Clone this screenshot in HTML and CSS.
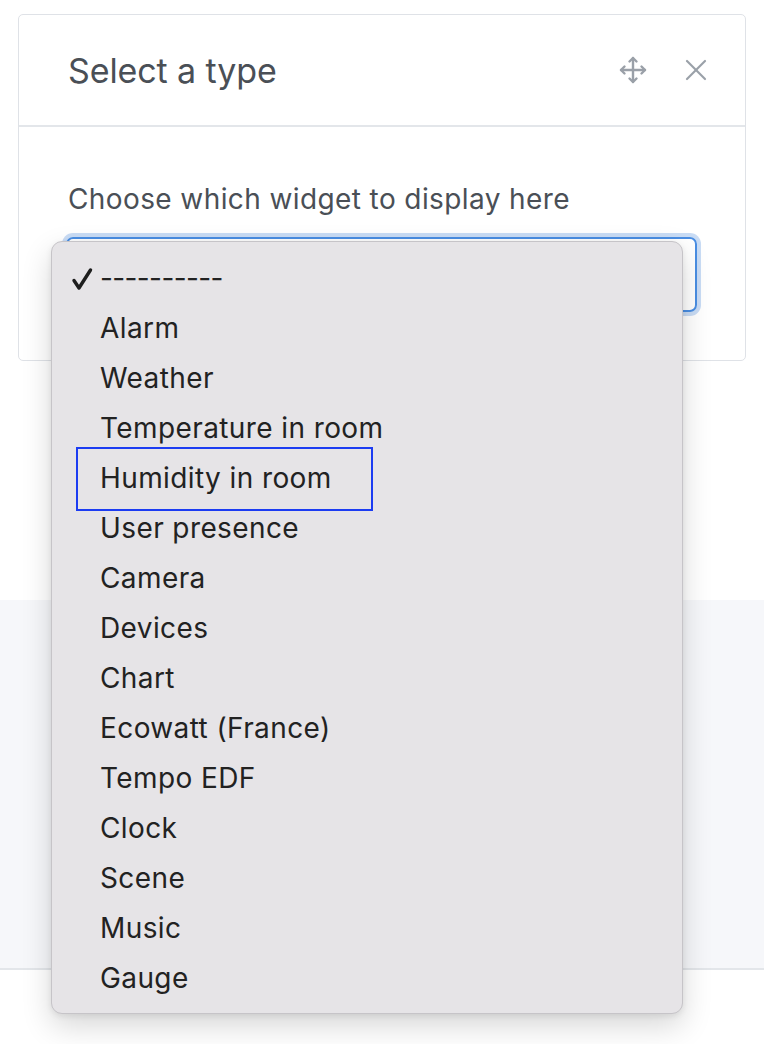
FILE: index.html
```html
<!DOCTYPE html>
<html lang="en">
<head>
<meta charset="utf-8">
<title>Select a type</title>
<link rel="stylesheet" href="styles.css">
</head>
<body>
<div class="page">
  <div class="top">
    <div class="modal">
      <div class="modal-header">
        <h5 class="modal-title">Select a type</h5>
        <div class="header-actions">
          <svg class="icon-move" width="28" height="28" viewBox="0 0 28 28" fill="none" stroke="#9aa0a8" stroke-width="2.4" stroke-linecap="round" stroke-linejoin="round">
            <line x1="14" y1="2" x2="14" y2="26"/>
            <line x1="2" y1="14" x2="26" y2="14"/>
            <polyline points="10.5,5.5 14,2 17.5,5.5"/>
            <polyline points="10.5,22.5 14,26 17.5,22.5"/>
            <polyline points="5.5,10.5 2,14 5.5,17.5"/>
            <polyline points="22.5,10.5 26,14 22.5,17.5"/>
          </svg>
          <svg class="icon-close" width="22" height="22" viewBox="0 0 22 22" fill="none" stroke="#9aa0a8" stroke-width="2.2" stroke-linecap="round">
            <line x1="2" y1="2" x2="20" y2="20"/>
            <line x1="20" y1="2" x2="2" y2="20"/>
          </svg>
        </div>
      </div>
      <div class="modal-body">
        <label class="field-label">Choose which widget to display here</label>
        <div class="select-wrap">
          <div class="select-box">
            <span class="chevron"></span>
          </div>
          <ul class="dropdown">
            <li class="item selected">
              <svg class="check" width="22" height="24" viewBox="0 0 22 24" fill="none" stroke="#1e1e1e" stroke-width="3.4" stroke-linecap="round" stroke-linejoin="round">
                <polyline points="3,13.5 8,21 19.5,3"/>
              </svg><span class="dashes">----------</span></li>
            <li class="item">Alarm</li>
            <li class="item">Weather</li>
            <li class="item">Temperature in room</li>
            <li class="item focused">Humidity in room<span class="focus-ring"></span></li>
            <li class="item">User presence</li>
            <li class="item">Camera</li>
            <li class="item">Devices</li>
            <li class="item">Chart</li>
            <li class="item">Ecowatt (France)</li>
            <li class="item">Tempo EDF</li>
            <li class="item">Clock</li>
            <li class="item">Scene</li>
            <li class="item">Music</li>
            <li class="item">Gauge</li>
          </ul>
        </div>
      </div>
    </div>
  </div>
  <div class="band"></div>
  <div class="bottom"></div>
</div>
</body>
</html>
```

FILE: styles.css
```css
* { box-sizing: border-box; }
html, body { margin: 0; padding: 0; }
body {
  background: #ffffff;
  font-family: Inter, "Liberation Sans", sans-serif;
  width: 764px;
  height: 1044px;
  overflow: hidden;
}
.page { display: flex; flex-direction: column; }
.top {
  height: 600px;
  padding: 14px 18px 0 18px;
}
.modal {
  width: 728px;
  height: 347px;
  border: 1px solid #dfe2e7;
  border-radius: 5px;
  background: #fff;
}
.modal-header {
  height: 112px;
  border-bottom: 2px solid #e3e6ea;
  display: flex;
  align-items: center;
  justify-content: space-between;
  padding: 0 38px 0 49px;
}
.modal-title {
  margin: 0;
  font-weight: 400;
  font-size: 34px;
  color: #4a4f56;
  letter-spacing: -0.1px;
}
.header-actions { display: flex; align-items: center; gap: 38px; }
.icon-move { display: block; }
.icon-close { display: block; }
.modal-body {
  padding: 56px 47px 0 47px;
}
.field-label {
  display: block;
  font-size: 28px;
  color: #4a4f56;
  margin-left: 2px;
  line-height: 32px;
  letter-spacing: 0.4px;
}
.select-wrap {
  position: relative;
  margin-top: 22px;
}
.select-box {
  height: 75px;
  width: 631px;
  border: 2px solid #4a8ee3;
  border-radius: 7px;
  box-shadow: 0 0 0 4px #c9dcf5;
  position: relative;
}
.chevron {
  position: absolute;
  right: 14px;
  top: 28px;
  width: 10px;
  height: 10px;
  border-right: 2px solid #444;
  border-bottom: 2px solid #444;
  transform: rotate(45deg);
}
.dropdown {
  position: absolute;
  left: -15px;
  top: 4px;
  width: 632px;
  margin: 0;
  padding: 12px 0 9px 0;
  list-style: none;
  background: #e6e4e7;
  border: 1px solid #c6c4c8;
  border-radius: 11px;
  box-shadow: 0 12px 30px rgba(0, 0, 0, 0.16), 0 2px 6px rgba(0, 0, 0, 0.08);
}
.item {
  position: relative;
  height: 50px;
  line-height: 49px;
  padding-left: 48px;
  font-size: 28px;
  letter-spacing: 0.4px;
  color: #222222;
  white-space: nowrap;
}
.dashes { letter-spacing: -0.6px; }
.check {
  position: absolute;
  left: 19px;
  top: 13px;
  display: block;
}
.focus-ring {
  position: absolute;
  left: 24px;
  top: -7px;
  width: 297px;
  height: 64px;
  border: 2px solid #1c3cf2;
}
.band {
  height: 370px;
  background: #f6f7fa;
  border-bottom: 2px solid #e3e6ea;
}
.bottom { flex: 1; background: #fff; }
```
